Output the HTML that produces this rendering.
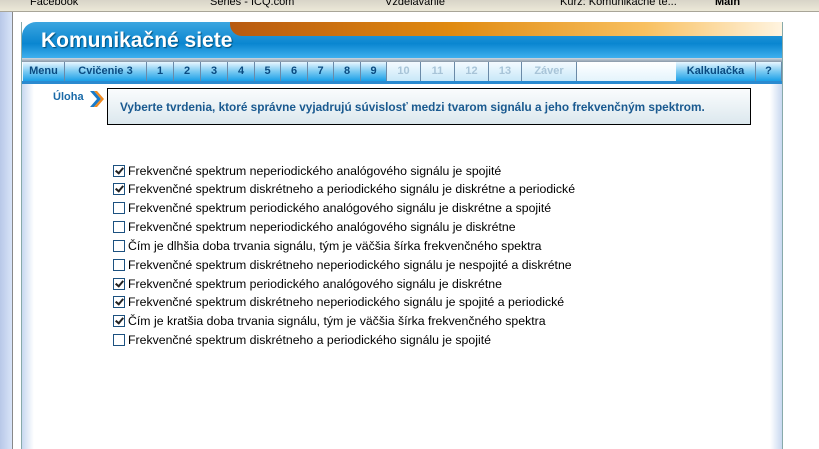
<!DOCTYPE html>
<html><head><meta charset="utf-8"><style>
*{margin:0;padding:0;box-sizing:border-box}
body{width:819px;height:449px;overflow:hidden;background:#fff;font-family:"Liberation Sans",sans-serif;position:relative}
.abs{position:absolute}
.topbar{left:0;top:0;width:819px;height:12px;background:linear-gradient(#d8d4c8,#ece9d8);border-bottom:1px solid #a8a598}
.topbar span{position:absolute;top:-4px;font-size:11px;color:#000}
.left{left:0;top:12px;width:12px;height:437px;background:linear-gradient(90deg,#b8c8e8,#d8e4f8)}
.vl{left:12px;top:12px;width:1px;height:437px;background:#888}
.frame{left:21px;top:22px;width:762px;height:427px;background:#fff;border-left:1px solid #8aa;border-right:1px solid #8aa}
.hdr{left:22px;top:22px;width:760px;height:36px;border-top-left-radius:14px;background:linear-gradient(#3ca6e0,#0a86d0 60%,#40b0ee);overflow:hidden}
.orange{left:208px;top:0;width:552px;height:14px;background:linear-gradient(90deg,#b85a10,#e08a10 40%,#f8c060 75%,#fff4e0);border-bottom-left-radius:12px}
.title{left:19px;top:7px;color:#fff;font-weight:bold;font-size:21px;letter-spacing:0px;text-shadow:1px 1px 1px #04507a}
.sep{left:22px;top:58px;width:760px;height:4px;background:linear-gradient(#d0d8e0,#8898a8)}
.tabs{left:22px;top:62px;width:760px;height:19px;background:linear-gradient(#fff,#e4f4fc)}
.tab{position:absolute;top:0;height:19px;background:linear-gradient(#e8f6ff,#7acaf2 50%,#1aa0e8);font-weight:bold;font-size:11px;color:#0a4a80;line-height:19px;text-align:center;border-right:1px solid #6a8aa8}
.tab.dis{color:#a8c4d8;background:linear-gradient(#f4faff,#c8e8f8)}
.bl{left:22px;top:81px;width:760px;height:3px;background:#2a8ad0}
.lg{left:22px;top:84px;width:12px;height:365px;background:linear-gradient(90deg,#c8d8f0,#fff)}
.rg{left:770px;top:84px;width:12px;height:365px;background:linear-gradient(90deg,#fff,#c8d8f0)}
.uloha{left:53px;top:91px;font-weight:bold;font-size:11px;color:#1a6aa8}
.arr{left:88px;top:90px}
.task{left:107px;top:88px;width:644px;height:37px;border:1px solid #000;background:linear-gradient(#fafcfd,#dce8ee);font-weight:bold;font-size:11.8px;color:#1a5a90;padding:11px 0 0 12px;white-space:nowrap}
.item{position:absolute;left:113px;font-size:12.3px;color:#000;height:14px;line-height:13px;white-space:nowrap}
.cb{display:inline-block;width:12px;height:12px;border:1px solid #1c5180;background:#fff;vertical-align:top;margin-right:3px;position:relative}
.cb.c::after{content:"";position:absolute;left:3px;top:0px;width:3px;height:6px;border:solid #222;border-width:0 2px 2px 0;transform:rotate(40deg)}
</style></head><body>
<div class="abs topbar"><span style="left:30px">Facebook</span><span style="left:210px">Series - ICQ.com</span><span style="left:385px">Vzdelávanie</span><span style="left:560px">Kurz: Komunikačné te...</span><span style="left:715px;font-weight:bold">Main</span></div>
<div class="abs left"></div><div class="abs vl"></div>
<div class="abs frame"></div>
<div class="abs hdr"><div class="abs orange"></div><div class="abs title">Komunikačné siete</div></div>
<div class="abs sep"></div>
<div class="abs tabs">
<div class="tab" style="left:1px;width:42px">Menu</div>
<div class="tab" style="left:43px;width:82px">Cvičenie 3</div>
<div class="tab" style="left:125px;width:27px">1</div>
<div class="tab" style="left:152px;width:27px">2</div>
<div class="tab" style="left:179px;width:27px">3</div>
<div class="tab" style="left:206px;width:27px">4</div>
<div class="tab" style="left:233px;width:26px">5</div>
<div class="tab" style="left:259px;width:27px">6</div>
<div class="tab" style="left:286px;width:26px">7</div>
<div class="tab" style="left:312px;width:27px">8</div>
<div class="tab" style="left:339px;width:26px">9</div>
<div class="tab dis" style="left:365px;width:34px">10</div>
<div class="tab dis" style="left:399px;width:34px">11</div>
<div class="tab dis" style="left:433px;width:34px">12</div>
<div class="tab dis" style="left:467px;width:33px">13</div>
<div class="tab dis" style="left:500px;width:55px">Záver</div>
<div class="tab" style="left:654px;width:80px">Kalkulačka</div>
<div class="tab" style="left:734px;width:26px">?</div>
</div>
<div class="abs bl"></div>
<div class="abs lg"></div><div class="abs rg"></div>
<div class="abs uloha">Úloha</div>
<svg class="abs arr" width="16" height="18" viewBox="0 0 16 18"><path d="M2 1 L9 9 L2 17 L6 17 L13 9 L6 1Z" fill="#1a7ac8"/><path d="M6 1 L13 9 L6 17 L9 17 L16 9 L9 1Z" fill="#f08a20"/></svg>
<div class="abs task">Vyberte tvrdenia, ktoré správne vyjadrujú súvislosť medzi tvarom signálu a jeho frekvenčným spektrom.</div>
<div class="item" style="top:165px"><span class="cb c"></span>Frekvenčné spektrum neperiodického analógového signálu je spojité</div>
<div class="item" style="top:183px"><span class="cb c"></span>Frekvenčné spektrum diskrétneho a periodického signálu je diskrétne a periodické</div>
<div class="item" style="top:202px"><span class="cb"></span>Frekvenčné spektrum periodického analógového signálu je diskrétne a spojité</div>
<div class="item" style="top:221px"><span class="cb"></span>Frekvenčné spektrum neperiodického analógového signálu je diskrétne</div>
<div class="item" style="top:240px"><span class="cb"></span>Čím je dlhšia doba trvania signálu, tým je väčšia šírka frekvenčného spektra</div>
<div class="item" style="top:259px"><span class="cb"></span>Frekvenčné spektrum diskrétneho neperiodického signálu je nespojité a diskrétne</div>
<div class="item" style="top:278px"><span class="cb c"></span>Frekvenčné spektrum periodického analógového signálu je diskrétne</div>
<div class="item" style="top:296px"><span class="cb c"></span>Frekvenčné spektrum diskrétneho neperiodického signálu je spojité a periodické</div>
<div class="item" style="top:315px"><span class="cb c"></span>Čím je kratšia doba trvania signálu, tým je väčšia šírka frekvenčného spektra</div>
<div class="item" style="top:334px"><span class="cb"></span>Frekvenčné spektrum diskrétneho a periodického signálu je spojité</div>
</body></html>
